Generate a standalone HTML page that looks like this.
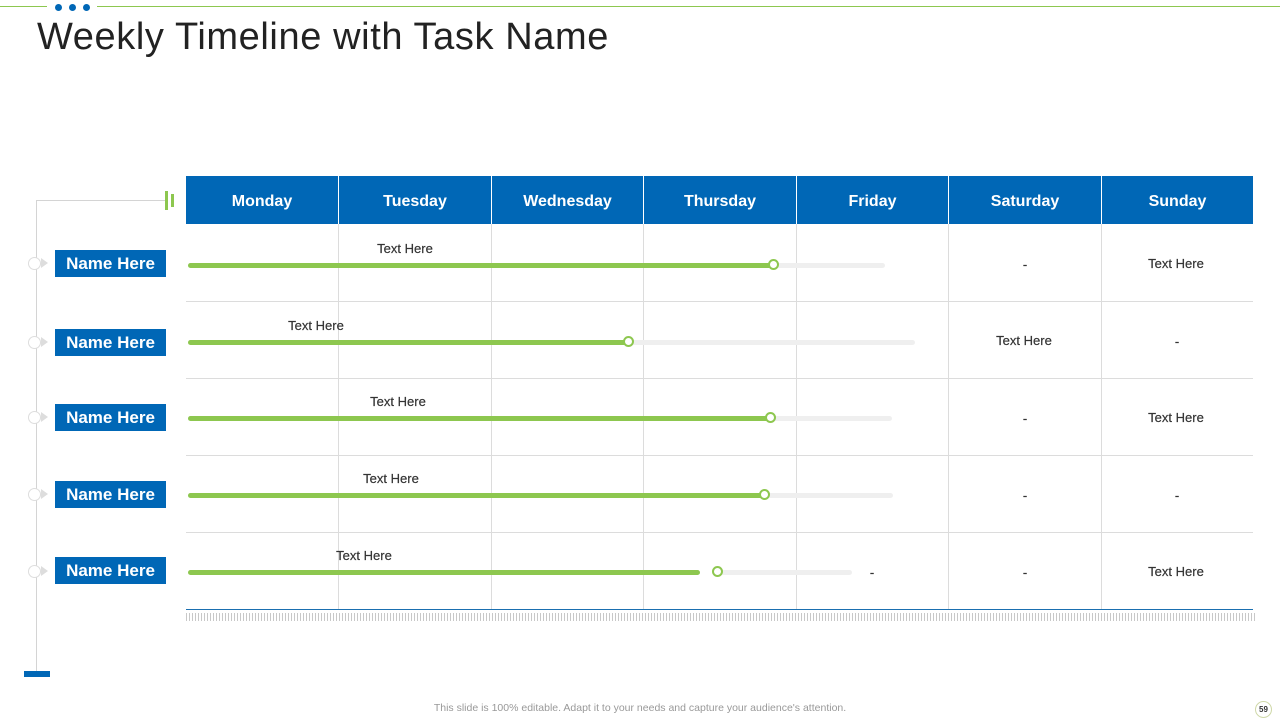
<!DOCTYPE html>
<html><head><meta charset="utf-8"><style>
*{margin:0;padding:0;box-sizing:border-box}
body{width:1280px;height:720px;background:#fff;position:relative;overflow:hidden;font-family:"Liberation Sans",sans-serif}
.a{position:absolute}
.hd{position:absolute;top:176px;height:48px;padding-top:4px;background:#0067b6;color:#fff;font-weight:bold;font-size:16px;display:flex;align-items:center;justify-content:center}
.vl{position:absolute;top:224px;height:385px;width:1px;background:#dcdcdc}
.hl{position:absolute;left:186px;width:1067px;height:1px;background:#dcdcdc}
.nm{position:absolute;left:55px;width:111px;height:27px;background:#0067b6;color:#fff;font-weight:bold;font-size:17px;display:flex;align-items:center;justify-content:center}
.tr{position:absolute;height:5px;background:#efefef;border-radius:3px}
.gr{position:absolute;height:5px;background:#8dc74f;border-radius:3px}
.kn{position:absolute;width:11px;height:11px;border-radius:50%;background:#fff;border:2px solid #8dc74f}
.tx{position:absolute;font-size:13px;color:#333;transform:translateX(-50%);white-space:nowrap;-webkit-text-stroke:0.2px #333}
.ci{position:absolute;left:28px;width:13px;height:13px;border-radius:50%;border:1px solid #ddd;background:#fff}
.ar{position:absolute;left:41px;width:0;height:0;border-left:7px solid #ddd;border-top:5px solid transparent;border-bottom:5px solid transparent}
</style></head><body>
<div class="a" style="left:0;top:6px;width:47px;height:1px;background:#8dc74f"></div>
<div class="a" style="left:97px;top:6px;width:1183px;height:1px;background:#8dc74f"></div>
<div class="a" style="left:55px;top:4px;width:7px;height:7px;border-radius:50%;background:#0067b6"></div>
<div class="a" style="left:69px;top:4px;width:7px;height:7px;border-radius:50%;background:#0067b6"></div>
<div class="a" style="left:83px;top:4px;width:7px;height:7px;border-radius:50%;background:#0067b6"></div>
<div class="a" style="left:37px;top:16px;font-size:38px;color:#222;letter-spacing:0.6px">Weekly Timeline with Task Name</div>

<div class="a" style="left:36px;top:200px;width:1px;height:472px;background:#d4d4d4"></div>
<div class="a" style="left:36px;top:200px;width:130px;height:1px;background:#d4d4d4"></div>
<div class="a" style="left:165px;top:191px;width:3px;height:19px;background:#8dc74f"></div>
<div class="a" style="left:171px;top:194px;width:3px;height:13px;background:#8dc74f"></div>
<div class="a" style="left:24px;top:671px;width:26px;height:6px;background:#0067b6"></div>

<div class="hd" style="left:186px;width:152px">Monday</div>
<div class="hd" style="left:339px;width:152px">Tuesday</div>
<div class="hd" style="left:492px;width:151px">Wednesday</div>
<div class="hd" style="left:644px;width:152px">Thursday</div>
<div class="hd" style="left:797px;width:151px">Friday</div>
<div class="hd" style="left:949px;width:152px">Saturday</div>
<div class="hd" style="left:1102px;width:151px">Sunday</div>

<div class="vl" style="left:338px"></div><div class="vl" style="left:491px"></div><div class="vl" style="left:643px"></div><div class="vl" style="left:796px"></div><div class="vl" style="left:948px"></div><div class="vl" style="left:1101px"></div>
<div class="hl" style="top:301px"></div><div class="hl" style="top:378px"></div><div class="hl" style="top:455px"></div><div class="hl" style="top:532px"></div>
<div class="a" style="left:186px;top:609px;width:1067px;height:1px;background:#1a6fb0"></div>
<div class="a" style="left:186px;top:613px;width:1071px;height:8px;background:repeating-linear-gradient(90deg,#c8c8c8 0,#c8c8c8 1px,transparent 1px,transparent 3px)"></div>

<div class="ci" style="top:257px"></div><div class="ar" style="top:258px"></div>
<div class="nm" style="top:250px">Name Here</div>
<div class="tr" style="left:188px;top:263px;width:697px"></div>
<div class="gr" style="left:188px;top:263px;width:586px"></div>
<div class="kn" style="left:768px;top:259px"></div>
<div class="tx" style="left:405px;top:241px">Text Here</div>
<div class="tx" style="left:1025px;top:257px">-</div>
<div class="tx" style="left:1176px;top:256px">Text Here</div>

<div class="ci" style="top:336px"></div><div class="ar" style="top:337px"></div>
<div class="nm" style="top:329px">Name Here</div>
<div class="tr" style="left:188px;top:340px;width:727px"></div>
<div class="gr" style="left:188px;top:340px;width:441px"></div>
<div class="kn" style="left:623px;top:336px"></div>
<div class="tx" style="left:316px;top:318px">Text Here</div>
<div class="tx" style="left:1024px;top:333px">Text Here</div>
<div class="tx" style="left:1177px;top:334px">-</div>

<div class="ci" style="top:411px"></div><div class="ar" style="top:412px"></div>
<div class="nm" style="top:404px">Name Here</div>
<div class="tr" style="left:188px;top:416px;width:704px"></div>
<div class="gr" style="left:188px;top:416px;width:583px"></div>
<div class="kn" style="left:765px;top:412px"></div>
<div class="tx" style="left:398px;top:394px">Text Here</div>
<div class="tx" style="left:1025px;top:411px">-</div>
<div class="tx" style="left:1176px;top:410px">Text Here</div>

<div class="ci" style="top:488px"></div><div class="ar" style="top:489px"></div>
<div class="nm" style="top:481px">Name Here</div>
<div class="tr" style="left:188px;top:493px;width:705px"></div>
<div class="gr" style="left:188px;top:493px;width:577px"></div>
<div class="kn" style="left:759px;top:489px"></div>
<div class="tx" style="left:391px;top:471px">Text Here</div>
<div class="tx" style="left:1025px;top:488px">-</div>
<div class="tx" style="left:1177px;top:488px">-</div>

<div class="ci" style="top:565px"></div><div class="ar" style="top:566px"></div>
<div class="nm" style="top:557px">Name Here</div>
<div class="tr" style="left:712px;top:570px;width:140px"></div>
<div class="gr" style="left:188px;top:570px;width:512px"></div>
<div class="kn" style="left:712px;top:566px"></div>
<div class="tx" style="left:364px;top:548px">Text Here</div>
<div class="tx" style="left:872px;top:565px">-</div>
<div class="tx" style="left:1025px;top:565px">-</div>
<div class="tx" style="left:1176px;top:564px">Text Here</div>

<div class="a" style="left:0;width:1280px;top:702px;text-align:center;font-size:10.5px;color:#999">This slide is 100% editable. Adapt it to your needs and capture your audience's attention.</div>
<div class="a" style="left:1255px;top:701px;width:17px;height:17px;border-radius:50%;border:1px solid #cfd8a8;font-size:8px;font-weight:bold;color:#333;display:flex;align-items:center;justify-content:center">59</div>
</body></html>
